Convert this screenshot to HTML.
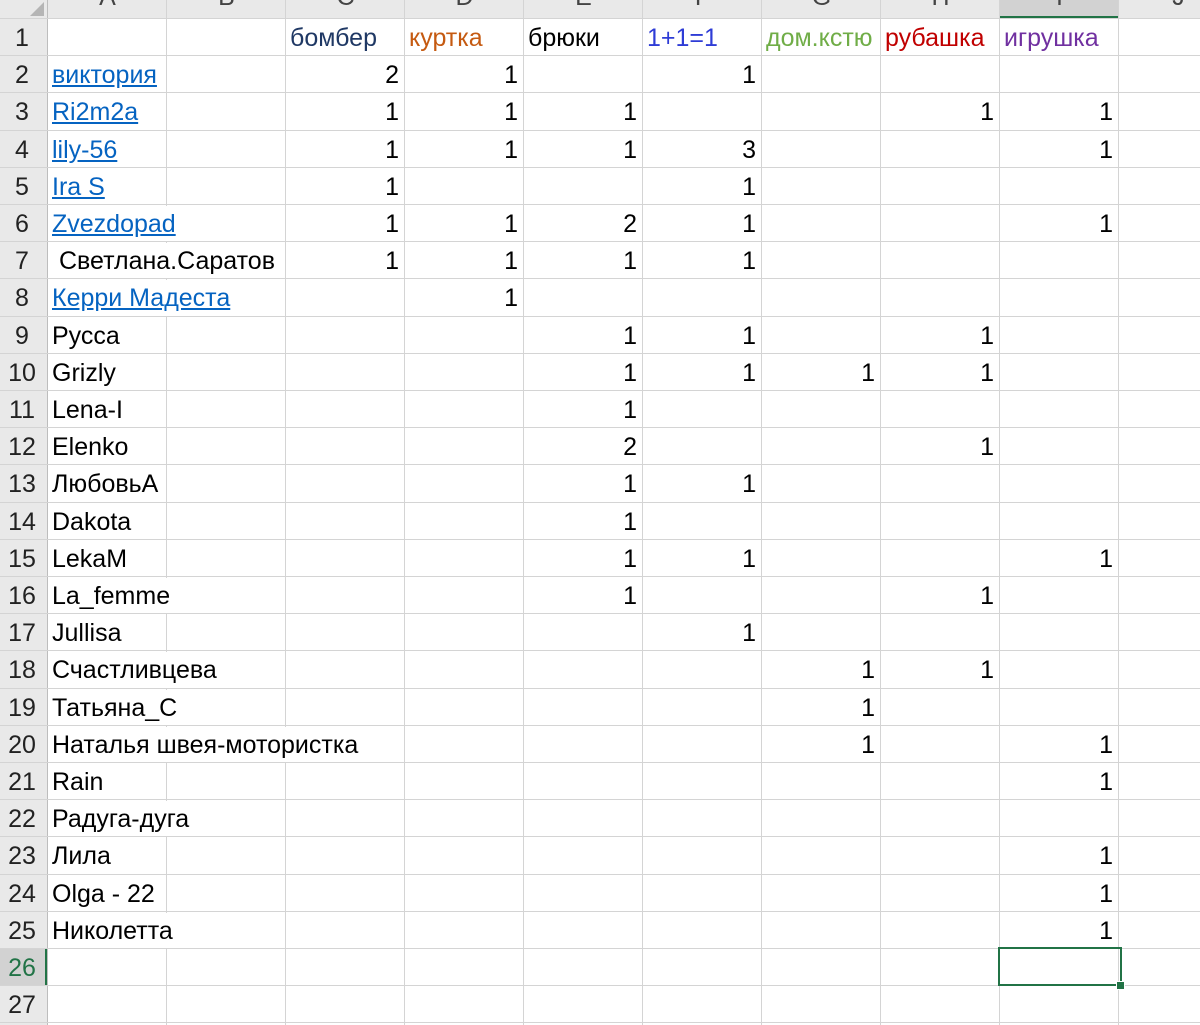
<!DOCTYPE html>
<html><head><meta charset="utf-8"><style>
body{margin:0;width:1200px;height:1025px;overflow:hidden;background:#fff;font-family:"Liberation Sans","Noto Sans CJK SC",sans-serif;}
.c{position:absolute;box-sizing:border-box;font-size:25px;line-height:37px;white-space:nowrap;color:#000;}
.v{position:absolute;background:#d4d4d4;width:1px;}
.h{position:absolute;background:#d4d4d4;height:1px;}
a{color:#0563c1;text-decoration:underline;}
</style></head><body>
<div id="g"></div>
<script>
var g=document.getElementById('g'),H='';
var cols=[48,167,286,405,524,643,762,881,1000,1119,1238];
var top0=18,rh=37.2,ty=2;
H+='<div style="position:absolute;left:0;top:0;width:1200px;height:18px;background:#e9e9e9;border-bottom:1px solid #bdbdbd"></div>';
H+='<div style="position:absolute;left:0;top:0;width:47px;height:1025px;background:#e9e9e9;border-right:1px solid #bdbdbd"></div>';
H+='<div style="position:absolute;left:1000px;top:0;width:119px;height:18px;background:#d2d2d2;border-bottom:2px solid #217346;box-sizing:border-box"></div>';
H+='<div style="position:absolute;left:0;top:'+(top0+25*rh)+'px;width:47px;height:'+rh+'px;background:#d2d2d2;border-right:2px solid #217346;box-sizing:border-box"></div>';
var L='ABCDEFGHIJ';
for(var i=0;i<10;i++){H+='<div class="c" style="left:'+cols[i]+'px;top:-21px;width:119px;text-align:center;color:#444">'+L[i]+'</div>';}
H+='<div style="position:absolute;left:30px;top:2px;width:0;height:0;border-left:14px solid transparent;border-bottom:14px solid #b5b5b5"></div>';
for(var i=0;i<cols.length;i++)H+='<div class="v" style="left:'+(cols[i]-1)+'px;top:0;height:1025px;'+(i>0?'':'background:#bdbdbd')+'"></div>';
for(var r=0;r<=27;r++){var y=Math.round(top0+r*rh);H+='<div class="h" style="left:0;top:'+y+'px;width:1200px"></div>';}
for(var r=1;r<=27;r++){var y=top0+(r-1)*rh+ty;H+='<div class="c" style="left:0;top:'+y+'px;width:44px;text-align:center;color:'+(r==26?'#217346':'#222')+'">'+r+'</div>';}
var names=['','<a>виктория</a>','<a>Ri2m2a</a>','<a>lily-56</a>','<a>Ira S</a>','<a>Zvezdopad</a>','&nbsp;Светлана.Саратов','<a>Керри Мадеста</a>','Русса','Grizly','Lena-I','Elenko','ЛюбовьА','Dakota','LekaM','La_femme','Jullisa','Счастливцева','Татьяна_С','Наталья швея-мотористка','Rain','Радуга-дуга','Лила','Olga - 22','Николетта'];
var wide={6:[167,286],7:[167,286],8:[167,286],16:[167,286],18:[167,286],19:[167,286],20:[167,405],22:[167,286],25:[167,286]};
for(var r=1;r<=names.length;r++){if(!names[r-1])continue;var y=top0+(r-1)*rh;
 if(wide[r])H+='<div style="position:absolute;left:'+(wide[r][0]-2)+'px;top:'+(y+2)+'px;width:'+(wide[r][1]-wide[r][0]-1)+'px;height:'+(rh-2)+'px;background:#fff"></div>';
 H+='<div class="c" style="left:52px;top:'+(y+ty)+'px">'+names[r-1]+'</div>';}
var hd=[['бомбер','#1f3864'],['куртка','#c55a11'],['брюки','#000'],['1+1=1','#2e3cd6'],['дом.кстю','#70ad47'],['рубашка','#c00000'],['игрушка','#7030a0']];
for(var i=0;i<7;i++)H+='<div class="c" style="left:'+(cols[i+2]+4)+'px;top:'+(top0+ty)+'px;color:'+hd[i][1]+'">'+hd[i][0]+'</div>';
var d={2:[2,1,0,1],3:[1,1,1,0,0,1,1],4:[1,1,1,3,0,0,1],5:[1,0,0,1],6:[1,1,2,1,0,0,1],7:[1,1,1,1],8:[0,1],9:[0,0,1,1,0,1],10:[0,0,1,1,1,1],11:[0,0,1],12:[0,0,2,0,0,1],13:[0,0,1,1],14:[0,0,1],15:[0,0,1,1,0,0,1],16:[0,0,1,0,0,1],17:[0,0,0,1],18:[0,0,0,0,1,1],19:[0,0,0,0,1],20:[0,0,0,0,1,0,1],21:[0,0,0,0,0,0,1],23:[0,0,0,0,0,0,1],24:[0,0,0,0,0,0,1],25:[0,0,0,0,0,0,1]};
for(var r in d){var y=top0+(r-1)*rh+ty;d[r].forEach(function(v,i){if(v)H+='<div class="c" style="left:'+cols[i+2]+'px;top:'+y+'px;width:113px;text-align:right">'+v+'</div>';});}
H+='<div style="position:absolute;left:998px;top:'+(top0+25*rh-1)+'px;width:124px;height:'+(rh+2)+'px;border:2px solid #217346;box-sizing:border-box"></div>';
H+='<div style="position:absolute;left:1116px;top:'+(top0+26*rh-4)+'px;width:7px;height:7px;background:#217346;border:1px solid #fff"></div>';
g.innerHTML=H;
</script>
</body></html>
